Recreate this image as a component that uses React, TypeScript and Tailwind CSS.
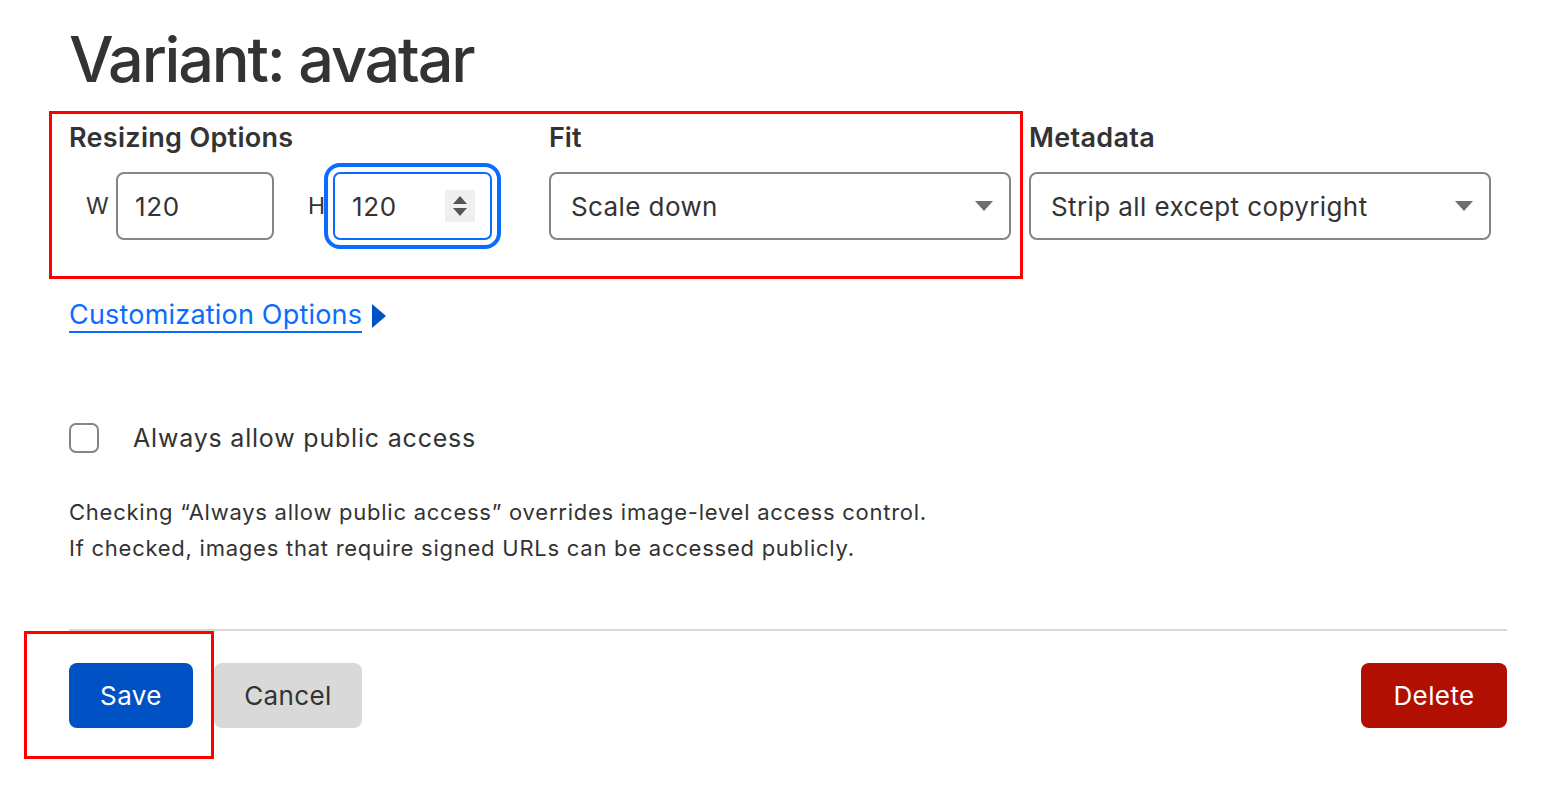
import React from "react";

function Caret() {
  return (
    <svg width="18" height="10" viewBox="0 0 18 10" className="shrink-0">
      <path d="M0 0 H18 L9 10 Z" fill="#6f6f6f" />
    </svg>
  );
}

function Spinner() {
  return (
    <div className="flex h-[32px] w-[30px] flex-col items-center justify-center gap-[4px] bg-[#efefef]">
      <svg width="14" height="8" viewBox="0 0 14 8">
        <path d="M0 8 L7 0 L14 8 Z" fill="#555555" />
      </svg>
      <svg width="14" height="8" viewBox="0 0 14 8">
        <path d="M0 0 H14 L7 8 Z" fill="#555555" />
      </svg>
    </div>
  );
}

function Select({ value }: { value: string }) {
  return (
    <div className="flex h-[68px] w-[462px] items-center justify-between rounded-[8px] border-2 border-[#858585] pl-[20px] pr-[16px]">
      <span className="text-[26px] tracking-[0.4px]">{value}</span>
      <Caret />
    </div>
  );
}

export default function App() {
  return (
    <div
      className="min-h-screen bg-white pl-[69px] pr-[57px] pt-[28px] text-[#333333]"
      style={{ fontFamily: "Inter, 'Noto Sans', sans-serif" }}
    >
      <h1 className="text-[63px] font-medium leading-none tracking-[-2.2px]">Variant: avatar</h1>

      {/* champs */}
      <div className="mt-[20px] flex items-start">
        <div className="-ml-[20px] flex border-[3px] border-[#ff0000] pb-[36px] pl-[17px] pr-[9px] pt-[8px]">
          <div className="w-[480px]">
            <div className="text-[27px] font-semibold leading-[32px] tracking-[0.3px]">Resizing Options</div>
            <div className="mt-[18px] flex items-center">
              <span className="ml-[17px] w-[20px] text-[23px]">W</span>
              <div className="ml-[10px] flex h-[68px] w-[158px] items-center rounded-[8px] border-2 border-[#858585] pl-[17px] text-[26px] tracking-[0.6px]">
                120
              </div>
              <span className="ml-[34px] w-[15px] text-[23px]">H</span>
              <div className="ml-[10px] flex h-[68px] w-[159px] items-center justify-between rounded-[7px] border-2 border-[#0a6cff] pl-[17px] pr-[15px] text-[26px] tracking-[0.6px] outline-4 outline-offset-[5px] outline-[#0a6cff]">
                <span>120</span>
                <Spinner />
              </div>
            </div>
          </div>
          <div>
            <div className="text-[27px] font-semibold leading-[32px]">Fit</div>
            <div className="mt-[18px]">
              <Select value="Scale down" />
            </div>
          </div>
        </div>
        <div className="ml-[6px] pt-[11px]">
          <div className="text-[27px] font-semibold leading-[32px] tracking-[0.3px]">Metadata</div>
          <div className="mt-[18px]">
            <Select value="Strip all except copyright" />
          </div>
        </div>
      </div>

      <div className="mt-[20px] flex items-center gap-[10px]">
        <span className="border-b-2 border-[#0a6cff] text-[27px] leading-[32px] tracking-[0.2px] text-[#0a6cff]">
          Customization Options
        </span>
        <svg width="14" height="24" viewBox="0 0 14 24">
          <path d="M0 0 L14 12 L0 24 Z" fill="#0051c3" />
        </svg>
      </div>

      <label className="mt-[89px] flex items-center gap-[34px]">
        <span className="h-[30px] w-[30px] rounded-[7px] border-2 border-[#858585]" />
        <span className="text-[25px] leading-[32px] tracking-[0.8px]">Always allow public access</span>
      </label>

      <div className="mt-[40px] text-[22px] leading-[36px] tracking-[0.75px]">
        <p>Checking “Always allow public access” overrides image-level access control.</p>
        <p>If checked, images that require signed URLs can be accessed publicly.</p>
      </div>

      <div className="mt-[63px] h-[2px] bg-[#d9d9d9]" />

      <div className="flex items-center">
        <div className="-ml-[45px] border-[3px] border-[#ff0000] pb-[28px] pl-[42px] pr-[18px] pt-[29px]">
          <button className="h-[65px] w-[124px] rounded-[8px] bg-[#0051c3] text-[26px] tracking-[0.4px] text-white">Save</button>
        </div>
        <button className="h-[65px] w-[148px] rounded-[8px] bg-[#d9d9d9] text-[26px] tracking-[0.4px] text-[#333333]">Cancel</button>
        <button className="ml-auto h-[65px] w-[146px] rounded-[8px] bg-[#b20f03] text-[26px] tracking-[0.4px] text-white">Delete</button>
      </div>
    </div>
  );
}
